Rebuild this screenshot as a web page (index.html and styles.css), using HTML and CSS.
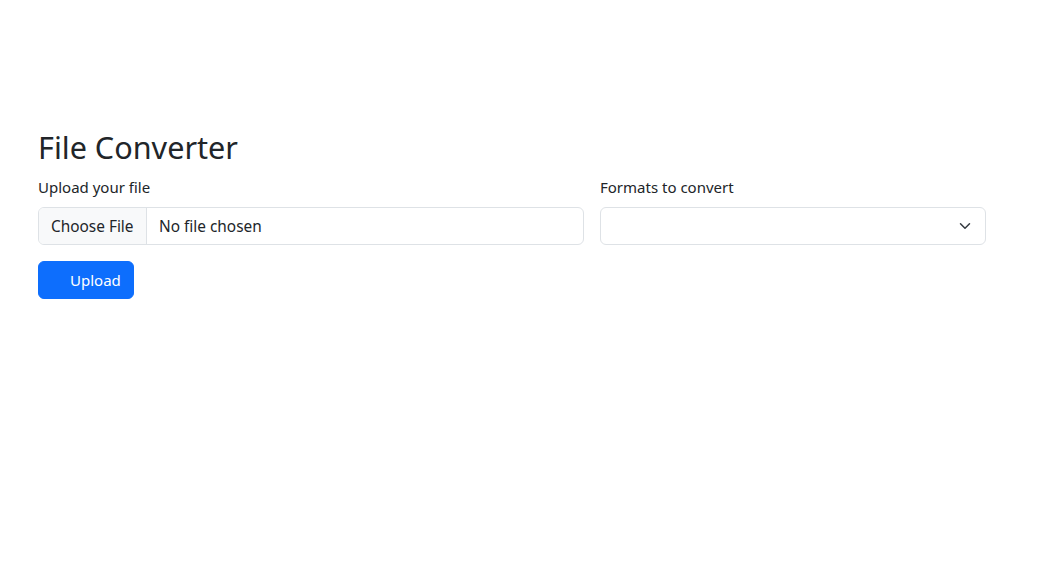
FILE: index.html
```html
<!DOCTYPE html>
<html lang="en">
<head>
<meta charset="utf-8">
<title>File Converter</title>
<link rel="stylesheet" href="styles.css">
</head>
<body>
<main class="page">
  <h1 class="title">File Converter</h1>
  <form class="form">
    <div class="row">
      <div class="field field-file">
        <label class="label">Upload your file</label>
        <div class="file-input">
          <span class="file-btn">Choose File</span>
          <span class="file-name">No file chosen</span>
        </div>
      </div>
      <div class="field field-select">
        <label class="label">Formats to convert</label>
        <div class="select">
          <svg class="chev" width="16" height="12" viewBox="0 0 16 16"><path d="M2 5l6 6 6-6" fill="none" stroke="#343a40" stroke-width="2" stroke-linecap="round" stroke-linejoin="round"/></svg>
        </div>
      </div>
    </div>
    <button type="button" class="btn"><span class="spin"></span>Upload</button>
  </form>
</main>
</body>
</html>
```
FILE: styles.css
```css
* { box-sizing: border-box; }
html, body { margin: 0; padding: 0; background: #fff; }
body {
  font-family: "Noto Sans", sans-serif;
  font-size: 15px;
  line-height: 1.5;
  color: #212529;
}
.page {
  padding: 129px 58px 0 38px;
}
.title {
  font-size: 30.6px;
  font-weight: 400;
  line-height: 1.2;
  margin: 0 0 10px;
}
.row {
  display: flex;
  gap: 16px;
}
.field-file { width: 546px; }
.field-select { flex: 1; }
.label {
  display: block;
  margin-bottom: 9px;
}
.file-input {
  display: flex;
  align-items: center;
  height: 38px;
  border: 1px solid #dee2e6;
  border-radius: 6px;
  overflow: hidden;
  font-size: 15.4px;
}
.file-btn {
  width: 108px;
  height: 100%;
  background: #f8f9fa;
  border-right: 1px solid #dee2e6;
  padding: 7px 12px 5px;
  line-height: 24px;
  white-space: nowrap;
}
.file-name {
  padding: 7px 12px 5px;
  line-height: 24px;
}
.select {
  height: 38px;
  border: 1px solid #dee2e6;
  border-radius: 6px;
  display: flex;
  align-items: center;
  justify-content: flex-end;
  padding-right: 12px;
}
.chev { width: 16px; height: 12px; }
.btn {
  margin-top: 16px;
  display: inline-flex;
  align-items: center;
  height: 38px;
  padding: 6px 12px 6px 31px;
  background: #0d6efd;
  border: 1px solid #0d6efd;
  border-radius: 6px;
  color: #fff;
  font: inherit;
  line-height: 24px;
}
```
